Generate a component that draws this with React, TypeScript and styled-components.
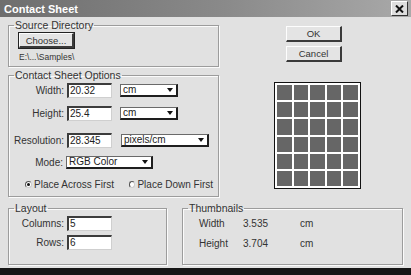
import React, { FC } from "react";
import styled, { createGlobalStyle } from "styled-components";

const GlobalStyle = createGlobalStyle`
  html, body {
    margin: 0;
    padding: 0;
    background: #161616;
  }
`;

const Window = styled.div`
  width: 411px;
  height: 268px;
  background: #e1e1e1;
  display: flex;
  flex-direction: column;
  font-family: "Liberation Sans", Arial, sans-serif;
  font-size: 10px;
  color: #2b2b2b;
  overflow: hidden;
`;

const TitleBar = styled.div`
  height: 17px;
  flex: none;
  display: flex;
  align-items: center;
  justify-content: space-between;
  padding: 0 3px 0 4px;
  background: linear-gradient(to right, #6e6e6e, #8a8a8a 55%, #a9a9a9);
`;

const Title = styled.span`
  color: #fff;
  font-weight: bold;
  font-size: 11px;
`;

const CloseBox = styled.div`
  width: 15px;
  height: 13px;
  background: #dedede;
  border-top: 1px solid #fff;
  border-left: 1px solid #fff;
  border-right: 1px solid #333;
  border-bottom: 1px solid #333;
  display: flex;
  align-items: center;
  justify-content: center;
`;

const Body = styled.div`
  display: flex;
  flex-direction: column;
  padding: 2px 0 0 8px;
`;

const TopRow = styled.div`
  display: flex;
`;

const LeftColumn = styled.div`
  width: 211px;
  display: flex;
  flex-direction: column;
`;

const RightColumn = styled.div`
  flex: 1;
  display: flex;
  flex-direction: column;
  align-items: center;
  padding-top: 7px;
`;

const Group = styled.fieldset<{ $width?: number; $height: number; $top?: number }>`
  margin: ${(p) => p.$top ?? 0}px 0 0 0;
  padding: 0;
  width: ${(p) => (p.$width ? `${p.$width}px` : "auto")};
  height: ${(p) => p.$height}px;
  box-sizing: border-box;
  border: 1px solid #9c9c9c;
  box-shadow: inset 1px 1px 0 #fbfbfb, 1px 1px 0 #fbfbfb;
  min-inline-size: 0;
`;

const Legend = styled.legend`
  margin-left: 5px;
  padding: 0 1px;
  line-height: 12px;
  font-size: 10.5px;
  color: #333;
`;

const GroupContent = styled.div<{ $pad: number; $top: number }>`
  display: flex;
  flex-direction: column;
  padding: ${(p) => p.$top}px 0 0 ${(p) => p.$pad}px;
`;

const RaisedButton = styled.div<{ $width: number; $height: number; $bold?: boolean }>`
  width: ${(p) => p.$width}px;
  height: ${(p) => p.$height}px;
  box-sizing: border-box;
  background: #e4e4e4;
  border-top: 1px solid #fdfdfd;
  border-left: 1px solid #fdfdfd;
  border-right: 2px solid #3a3a3a;
  border-bottom: 2px solid #3a3a3a;
  outline: ${(p) => (p.$bold ? "1px solid #222" : "none")};
  display: flex;
  align-items: center;
  justify-content: center;
  font-size: 9.5px;
  color: #333;
`;

const ButtonStack = styled.div`
  display: flex;
  flex-direction: column;
  gap: 4px;
  margin-left: -2px;
`;

const PathText = styled.div`
  margin-top: 4px;
  font-size: 8.5px;
  line-height: 10px;
  color: #333;
`;

const Row = styled.div<{ $top: number }>`
  display: flex;
  align-items: center;
  margin-top: ${(p) => p.$top}px;
`;

const Label = styled.span<{ $width: number }>`
  width: ${(p) => p.$width}px;
  text-align: right;
  padding-right: 3px;
  box-sizing: border-box;
  flex: none;
  color: #333;
  white-space: nowrap;
`;

const TextBox = styled.div`
  width: 45px;
  height: 15px;
  box-sizing: border-box;
  background: #fff;
  border-top: 2px solid #3c3c3c;
  border-left: 2px solid #3c3c3c;
  border-right: 1px solid #cfcfcf;
  border-bottom: 1px solid #cfcfcf;
  padding-left: 1px;
  line-height: 12px;
  color: #222;
`;

const Select = styled.div<{ $width: number; $gap: number }>`
  width: ${(p) => p.$width}px;
  height: 13px;
  margin-left: ${(p) => p.$gap}px;
  box-sizing: border-box;
  background: #fff;
  border-top: 1px solid #6a6a6a;
  border-left: 1px solid #6a6a6a;
  border-right: 2px solid #1e1e1e;
  border-bottom: 2px solid #1e1e1e;
  display: flex;
  align-items: center;
  justify-content: space-between;
  padding: 0 3px 0 2px;
  line-height: 10px;
  color: #222;
`;

const Arrow = styled.span`
  width: 0;
  height: 0;
  border-left: 3px solid transparent;
  border-right: 3px solid transparent;
  border-top: 4px solid #111;
`;

const RadioRow = styled.div`
  display: flex;
  align-items: center;
  margin-top: 10px;
  padding-left: 16px;
`;

const RadioOption = styled.div<{ $width: number }>`
  width: ${(p) => p.$width}px;
  flex: none;
  display: flex;
  align-items: center;
  gap: 2px;
  color: #333;
  white-space: nowrap;
`;

const RadioCircle = styled.span<{ $checked?: boolean }>`
  width: 7px;
  height: 7px;
  border-radius: 50%;
  box-sizing: border-box;
  border: 1px solid #555;
  border-right-color: #ccc;
  border-bottom-color: #ccc;
  background: #fff;
  display: flex;
  align-items: center;
  justify-content: center;
  &::after {
    content: "";
    width: 3px;
    height: 3px;
    border-radius: 50%;
    background: ${(p) => (p.$checked ? "#111" : "transparent")};
  }
`;

const Preview = styled.div`
  margin-top: 20px;
  margin-left: 5px;
  width: 87px;
  height: 107px;
  box-sizing: border-box;
  border: 1px solid #111;
  background: #fff;
  padding: 2px;
  display: grid;
  grid-template-columns: repeat(5, 1fr);
  grid-template-rows: repeat(6, 1fr);
  gap: 2px;
`;

const Cell = styled.div`
  background: #666;
`;

const BottomRow = styled.div`
  display: flex;
  gap: 15px;
  margin-top: 5px;
`;

const Value = styled.span<{ $width: number }>`
  width: ${(p) => p.$width}px;
  flex: none;
  color: #333;
`;

const SelectField: FC<{ width: number; gap: number; value: string }> = ({ width, gap, value }) => (
  <Select $width={width} $gap={gap}>
    <span>{value}</span>
    <Arrow />
  </Select>
);

export default function App() {
  return (
    <>
      <GlobalStyle />
      <Window>
        <TitleBar>
          <Title>Contact Sheet</Title>
          <CloseBox>
            <svg width="9" height="8" viewBox="0 0 9 8">
              <path d="M1 0.5 L8 7.5 M8 0.5 L1 7.5" stroke="#111" strokeWidth="2" />
            </svg>
          </CloseBox>
        </TitleBar>
        <Body>
          <TopRow>
            <LeftColumn>
              <Group $height={48}>
                <Legend>Source Directory</Legend>
                <GroupContent $pad={10} $top={2}>
                  <RaisedButton $width={55} $height={15} $bold>
                    Choose...
                  </RaisedButton>
                  <PathText>E:\...\Samples\</PathText>
                </GroupContent>
              </Group>
              <Group $height={128} $top={2}>
                <Legend>Contact Sheet Options</Legend>
                <GroupContent $pad={0} $top={2}>
                  <Row $top={0}>
                    <Label $width={58}>Width:</Label>
                    <TextBox>20.32</TextBox>
                    <SelectField width={58} gap={8} value="cm" />
                  </Row>
                  <Row $top={8}>
                    <Label $width={58}>Height:</Label>
                    <TextBox>25.4</TextBox>
                    <SelectField width={58} gap={8} value="cm" />
                  </Row>
                  <Row $top={12}>
                    <Label $width={58}>Resolution:</Label>
                    <TextBox>28.345</TextBox>
                    <SelectField width={88} gap={9} value="pixels/cm" />
                  </Row>
                  <Row $top={8}>
                    <Label $width={57}>Mode:</Label>
                    <SelectField width={87} gap={0} value="RGB Color" />
                  </Row>
                  <RadioRow>
                    <RadioOption $width={104}>
                      <RadioCircle $checked />
                      Place Across First
                    </RadioOption>
                    <RadioOption $width={84}>
                      <RadioCircle />
                      Place Down First
                    </RadioOption>
                  </RadioRow>
                </GroupContent>
              </Group>
            </LeftColumn>
            <RightColumn>
              <ButtonStack>
                <RaisedButton $width={56} $height={16}>
                  OK
                </RaisedButton>
                <RaisedButton $width={56} $height={16}>
                  Cancel
                </RaisedButton>
              </ButtonStack>
              <Preview>
                {Array.from({ length: 30 }).map((_, i) => (
                  <Cell key={i} />
                ))}
              </Preview>
            </RightColumn>
          </TopRow>
          <BottomRow>
            <Group $width={159} $height={63}>
              <Legend>Layout</Legend>
              <GroupContent $pad={0} $top={2}>
                <Row $top={0}>
                  <Label $width={58}>Columns:</Label>
                  <TextBox>5</TextBox>
                </Row>
                <Row $top={4}>
                  <Label $width={58}>Rows:</Label>
                  <TextBox>6</TextBox>
                </Row>
              </GroupContent>
            </Group>
            <Group $width={221} $height={63}>
              <Legend>Thumbnails</Legend>
              <GroupContent $pad={16} $top={4}>
                <Row $top={0}>
                  <Value $width={44}>Width</Value>
                  <Value $width={57}>3.535</Value>
                  <Value $width={20}>cm</Value>
                </Row>
                <Row $top={9}>
                  <Value $width={44}>Height</Value>
                  <Value $width={57}>3.704</Value>
                  <Value $width={20}>cm</Value>
                </Row>
              </GroupContent>
            </Group>
          </BottomRow>
        </Body>
      </Window>
    </>
  );
}
